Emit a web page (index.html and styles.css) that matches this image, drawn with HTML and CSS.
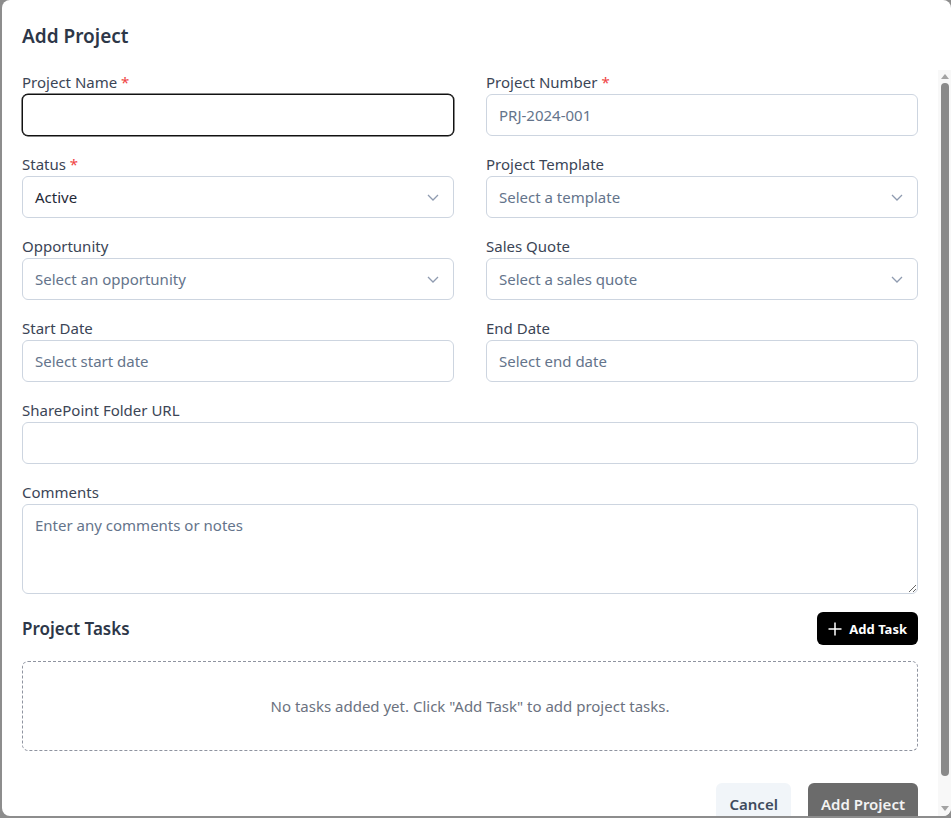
FILE: index.html
```html
<!DOCTYPE html>
<html lang="en">
<head>
    <meta charset="UTF-8">
    <title>Add Project</title>

    <link rel="stylesheet" href="styles.css">
</head>
<body>
    <div class="backdrop">
        <div class="dialog">
            <div class="dialog-header">
                <h2>Add Project</h2>
            </div>

            <form class="dialog-body">
                <div class="grid">
                    <div class="field">
                        <label>Project Name <span class="req">*</span></label>
                        <input type="text" class="control focused">
                    </div>
                    <div class="field">
                        <label>Project Number <span class="req">*</span></label>
                        <input type="text" class="control" placeholder="PRJ-2024-001">
                    </div>

                    <div class="field">
                        <label>Status <span class="req">*</span></label>
                        <div class="control select">
                            <span class="value">Active</span>
                            <svg class="chevron" viewBox="0 0 16 16"><path d="M3 6l5 5 5-5"/></svg>
                        </div>
                    </div>
                    <div class="field">
                        <label>Project Template</label>
                        <div class="control select">
                            <span>Select a template</span>
                            <svg class="chevron" viewBox="0 0 16 16"><path d="M3 6l5 5 5-5"/></svg>
                        </div>
                    </div>

                    <div class="field">
                        <label>Opportunity</label>
                        <div class="control select">
                            <span>Select an opportunity</span>
                            <svg class="chevron" viewBox="0 0 16 16"><path d="M3 6l5 5 5-5"/></svg>
                        </div>
                    </div>
                    <div class="field">
                        <label>Sales Quote</label>
                        <div class="control select">
                            <span>Select a sales quote</span>
                            <svg class="chevron" viewBox="0 0 16 16"><path d="M3 6l5 5 5-5"/></svg>
                        </div>
                    </div>

                    <div class="field">
                        <label>Start Date</label>
                        <input type="text" class="control" placeholder="Select start date">
                    </div>
                    <div class="field">
                        <label>End Date</label>
                        <input type="text" class="control" placeholder="Select end date">
                    </div>

                    <div class="field wide">
                        <label>SharePoint Folder URL</label>
                        <input type="text" class="control">
                    </div>

                    <div class="field wide">
                        <label>Comments</label>
                        <textarea class="control notes" placeholder="Enter any comments or notes"></textarea>
                    </div>
                </div>

                <div class="tasks-head">
                    <h3>Project Tasks</h3>
                    <button type="button" class="btn-dark">
                        <svg viewBox="0 0 16 16"><path d="M8 1.5v13M1.5 8h13"/></svg>
                        Add Task
                    </button>
                </div>

                <div class="tasks-empty">
                    No tasks added yet. Click "Add Task" to add project tasks.
                </div>

                <div class="actions">
                    <button type="button" class="btn-light">Cancel</button>
                    <button type="submit" class="btn-submit">Add Project</button>
                </div>
            </form>

            <!-- drawn scroll rail for the form body -->
            <div class="rail">
                <span class="arrow up"></span>
                <span class="thumb"></span>
                <span class="arrow down"></span>
            </div>
        </div>
    </div>
</body>
</html>
```

FILE: styles.css
```css
html, body {
    margin: 0;
    height: 100%;
    overflow: hidden;
}

body {
    background: #8d8d8d;
    font-family: 'Noto Sans', 'Open Sans', sans-serif;
    color: #374151;
}

.backdrop {
    height: 100%;
    padding-left: 2px;
}

.dialog {
    position: relative;
    background: #fff;
    height: 816px;
    border-radius: 8px;
    display: flex;
    flex-direction: column;
    overflow: hidden;
}

.dialog-header {
    height: 70px;
    padding: 22px 20px 0;
    box-sizing: border-box;
    flex-shrink: 0;
}

h2 {
    margin: 0;
    font-size: 19px;
    line-height: 28px;
    font-weight: 600;
    color: #2d3748;
}

.dialog-body {
    flex: 1;
    overflow-y: auto;
    scrollbar-width: none;
    padding: 2px 33px 24px 20px;
}

.rail {
    position: absolute;
    top: 70px;
    right: 0;
    bottom: 0;
    width: 13px;
    background: #f8f8f8;
    display: flex;
    flex-direction: column;
    align-items: center;
}

.thumb {
    flex: 1;
    width: 8px;
    margin: 4px 0 30px;
    border-radius: 4px;
    background: #8a8a8a;
}

.arrow {
    width: 0;
    height: 0;
    border-left: 4px solid transparent;
    border-right: 4px solid transparent;
}

.arrow.up {
    margin-top: 4px;
    border-bottom: 5px solid #a3a3a3;
}

.arrow.down {
    margin-bottom: 5px;
    border-top: 5px solid #a3a3a3;
}

.grid {
    display: grid;
    grid-template-columns: 1fr 1fr;
    column-gap: 32px;
    row-gap: 18px;
}

.field {
    display: flex;
    flex-direction: column;
    gap: 2px;
}

.field.wide {
    grid-column: 1 / -1;
}

label {
    font-size: 15px;
    line-height: 20px;
    color: #3b4556;
}

.req {
    color: #ef4444;
}

.control {
    box-sizing: border-box;
    height: 42px;
    margin: 0;
    padding: 0 12px;
    border: 1px solid #cdd5e0;
    border-radius: 6px;
    background: #fff;
    font-family: inherit;
    font-size: 15px;
    color: #1f2937;
    outline: none;
}

.control::placeholder {
    color: #64748b;
}

.control.focused {
    border-color: #111;
    box-shadow: 0 0 0 0.5px #111;
}

.select {
    display: flex;
    align-items: center;
    justify-content: space-between;
    color: #64748b;
}

.select .value {
    color: #1f2937;
}

.chevron {
    width: 16px;
    height: 16px;
    fill: none;
    stroke: #8f9bb0;
    stroke-width: 1.3;
}

.notes {
    height: 90px;
    padding-top: 10px;
    resize: vertical;
    line-height: 20px;
}

.tasks-head {
    display: flex;
    align-items: center;
    justify-content: space-between;
    margin-top: 18px;
}

h3 {
    margin: 0;
    font-size: 17px;
    font-weight: 600;
    color: #2d3748;
}

.btn-dark {
    display: flex;
    align-items: center;
    gap: 6px;
    height: 33px;
    padding: 0 11px 0 10px;
    border: none;
    border-radius: 6px;
    background: #000;
    color: #fff;
    font-family: inherit;
    font-size: 13px;
    font-weight: 700;
}

.btn-dark svg {
    width: 16px;
    height: 16px;
    fill: none;
    stroke: #fff;
    stroke-width: 1.5;
}

.tasks-empty {
    box-sizing: border-box;
    margin-top: 16px;
    height: 90px;
    border: 1px dashed #8f94a0;
    border-radius: 6px;
    display: flex;
    align-items: center;
    justify-content: center;
    font-size: 15px;
    color: #6b7280;
}

.actions {
    display: flex;
    justify-content: flex-end;
    gap: 17px;
    margin-top: 32px;
}

.actions button {
    height: 42px;
    padding: 0 13px;
    border: none;
    border-radius: 6px;
    font-family: inherit;
    font-size: 15px;
    font-weight: 600;
}

.btn-light {
    background: #f1f5f9;
    color: #3f4b5e;
}

.btn-submit {
    background: #6b6b6b;
    color: #f3f3f3;
}
```
